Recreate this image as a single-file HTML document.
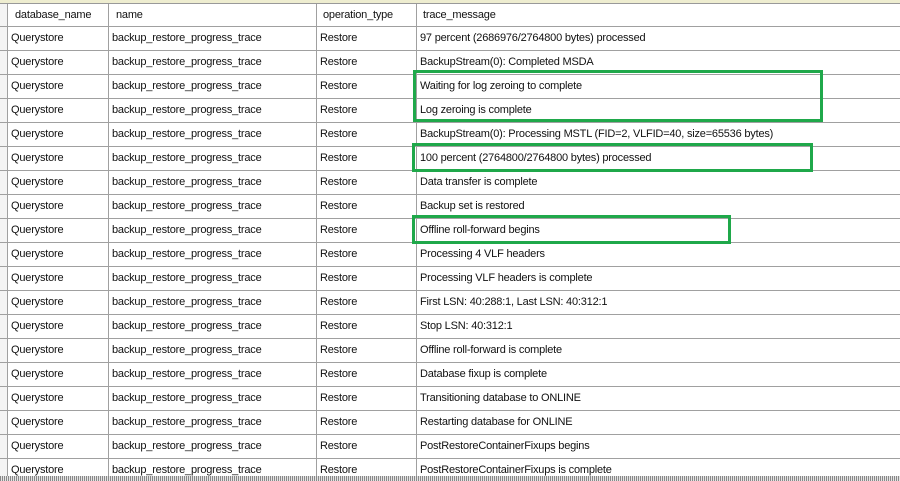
<!DOCTYPE html>
<html><head><style>
body{margin:0;width:900px;height:481px;overflow:hidden;background:#fff;font-family:"Liberation Sans",Arial,sans-serif;font-size:11px;color:#111;position:relative}
.top{position:absolute;left:0;top:0;width:900px;height:3px;background:#eeedd0}
.topl{position:absolute;left:0;top:3px;width:900px;height:1px;background:#999}
.hl{position:absolute;left:0;width:900px;height:1px;background:#a0a0a0}
.vl{position:absolute;top:4px;height:472px;width:1px;background:#a0a0a0}
.t{position:absolute;white-space:nowrap;line-height:14px;letter-spacing:-0.2px}
.g{position:absolute;border:3px solid #1fa84a;box-sizing:border-box}
.bot{position:absolute;left:0;top:476px;width:900px;height:5px;background:repeating-linear-gradient(90deg,#888 0 1px,#e4e4e4 1px 2px)}
</style></head><body>
<div class="top"></div><div class="topl"></div>
<div style="position:absolute;left:0;top:4px;width:7px;height:472px;background:#f4f4f4"></div>
<div class="vl" style="left:7px"></div>
<div class="vl" style="left:108px"></div>
<div class="vl" style="left:316px"></div>
<div class="vl" style="left:416px"></div>
<div class="t" style="left:15px;top:8px">database_name</div>
<div class="t" style="left:116px;top:8px">name</div>
<div class="t" style="left:323px;top:8px">operation_type</div>
<div class="t" style="left:423px;top:8px">trace_message</div>
<div id="rows"></div>
<script>
var m=["97 percent (2686976/2764800 bytes) processed","BackupStream(0): Completed MSDA","Waiting for log zeroing to complete","Log zeroing is complete","BackupStream(0): Processing MSTL (FID=2, VLFID=40, size=65536 bytes)","100 percent (2764800/2764800 bytes) processed","Data transfer is complete","Backup set is restored","Offline roll-forward begins","Processing 4 VLF headers","Processing VLF headers is complete","First LSN: 40:288:1, Last LSN: 40:312:1","Stop LSN: 40:312:1","Offline roll-forward is complete","Database fixup is complete","Transitioning database to ONLINE","Restarting database for ONLINE","PostRestoreContainerFixups begins","PostRestoreContainerFixups is complete"];
var h="";
for(var i=0;i<m.length;i++){var y=26+i*24;h+='<div class="hl" style="top:'+y+'px"></div>';var ty=y+5;
h+='<div class="t" style="left:11px;top:'+ty+'px">Querystore</div><div class="t" style="left:112px;top:'+ty+'px">backup_restore_progress_trace</div><div class="t" style="left:320px;top:'+ty+'px">Restore</div><div class="t" style="left:420px;top:'+ty+'px">'+m[i]+'</div>';}
document.getElementById("rows").innerHTML=h;
</script>
<div class="g" style="left:413px;top:70px;width:410px;height:52px"></div>
<div class="g" style="left:412px;top:143px;width:401px;height:29px"></div>
<div class="g" style="left:412px;top:215px;width:319px;height:29px"></div>
<div class="bot"></div>
</body></html>
